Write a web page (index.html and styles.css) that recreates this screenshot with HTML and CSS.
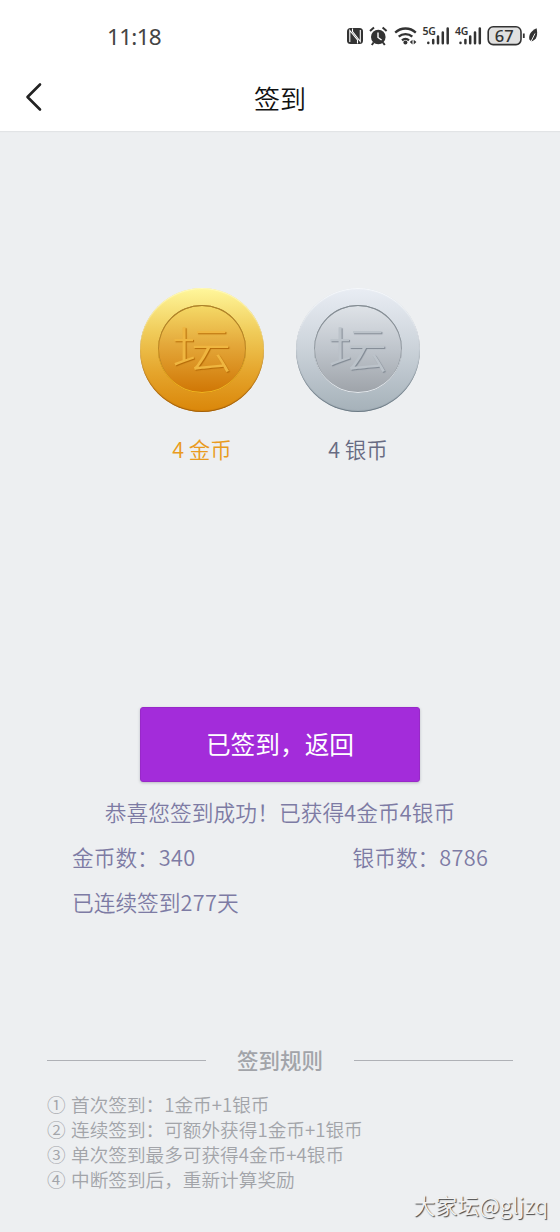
FILE: index.html
```html
<!DOCTYPE html>
<html lang="zh-CN">
<head>
<meta charset="utf-8">
<title>签到</title>
<link rel="stylesheet" href="styles.css">
</head>
<body>
<header class="top">
  <div class="status">
    <span class="time">11:18</span>
    <svg class="icons" width="194" height="26" viewBox="346 23 194 26" fill="none" stroke="#333" stroke-width="2">
      <rect x="347" y="28" width="16" height="16" rx="3.500" fill="#333" stroke="none"/>
      <path d="M349.800 42V30.500L357.500 40V43.500" stroke="#fff" stroke-width="1.100"/>
      <path d="M352.500 28.500V31.500L360.300 41.500V30" stroke="#fff" stroke-width="1.100"/>
      <circle cx="378.300" cy="37" r="7.300" fill="#333" stroke="none"/>
      <path d="M370 31l4-3.500M386.600 31l-4-3.500M373.600 42.500l-1.800 2.500M383 42.500l1.800 2.500"/>
      <path d="M378 32.500v5l3.600 2.500" stroke="#fff" stroke-width="1.400"/>
      <path d="M395.200 32.600a15 15 0 0 1 20.600 0M398.700 36.700a10 10 0 0 1 13.600 0M402 40.300a5.300 5.300 0 0 1 7 0" stroke-width="2.300"/>
      <circle cx="405.400" cy="42.600" r="2" fill="#333" stroke="none"/>
      <path d="M412.500 39.800v4.600l-2.700-2.300zM413.700 39.800v4.600l2.700-2.300z" fill="#333" stroke="none"/>
      <g stroke-width="2.500" stroke-linecap="round">
        <path d="M428.300 42.800v.3M433.200 40v3.200M438 36.500v6.700M442.800 32.500v10.700M447.700 28.500v14.700"/>
        <path d="M460.500 42.800v.3M465.400 40v3.200M470.200 36.500v6.700M475 32.500v10.700M479.800 28.500v14.700"/>
      </g>
      <g class="net"><text x="422.600" y="35.200">5G</text><text x="455" y="35.200">4G</text></g>
      <rect x="488.200" y="26.800" width="32.800" height="17.800" rx="5" fill="#e0e0e0" stroke-width="1.600"/>
      <text class="battery" x="504.300" y="41.600">67</text>
      <path d="M523.800 33.500v4.500" stroke-width="1.800"/>
      <path d="M536.600 28.300C531 31 528.500 34.500 529.300 39.500L531.500 41.500C537 39.500 538 35 536.600 28.300Z" fill="#333" stroke="none"/>
      <path d="M530 43.500l5-10" stroke="#fff" stroke-width=".9"/>
    </svg>
  </div>
  <nav class="nav">
    <svg class="back" width="18" height="30" viewBox="0 0 18 30"><path d="M15 2.500L2.500 15L15 27.500"/></svg>
    <h1 class="title">签到</h1>
    <span></span>
  </nav>
</header>
<main class="page">
  <section class="coins">
    <figure class="coin gold">
      <div class="disc"><div class="inner"><span class="mark">坛</span></div></div>
      <figcaption class="amount">4 金币</figcaption>
    </figure>
    <figure class="coin silver">
      <div class="disc"><div class="inner"><span class="mark">坛</span></div></div>
      <figcaption class="amount">4 银币</figcaption>
    </figure>
  </section>
  <button class="action">已签到，返回</button>
  <section class="result">
    <p class="congrats">恭喜您签到成功！已获得4金币4银币</p>
    <div class="totals"><span>金币数：<b>340</b></span><span>银币数：<b>8786</b></span></div>
    <p class="streak">已连续签到<b>277</b>天</p>
  </section>
  <section class="rules">
    <h2 class="rules-title"><span>签到规则</span></h2>
    <ul class="list">
      <li><span class="num">①</span>首次签到：1金币+1银币</li>
      <li><span class="num">②</span>连续签到：可额外获得1金币+1银币</li>
      <li><span class="num">③</span>单次签到最多可获得4金币+4银币</li>
      <li><span class="num">④</span>中断签到后，重新计算奖励</li>
    </ul>
  </section>
  <div class="watermark">大家坛@gljzq</div>
</main>
</body>
</html>
```
FILE: styles.css
```css
* { box-sizing: border-box; margin: 0; padding: 0; }
body {
  width: 560px; height: 1232px; overflow: hidden;
  display: flex; flex-direction: column;
  background: #edeff1;
  font-family: "Noto Sans CJK SC", sans-serif;
  font-weight: 350;
}
.top { height: 131px; flex: none; background: #fff; box-shadow: 0 1px 1px #e2e4e6; }
.status { display: flex; justify-content: space-between; height: 71px; padding: 23px 20px 0 107px; }
.time { font: 400 22.5px/28px "Noto Sans", sans-serif; color: #444; letter-spacing: -.7px; }
.net text { font: 600 10.500px "Noto Sans", sans-serif; fill: #333; stroke: none; letter-spacing: -.3px; }
.battery { font: 500 16.500px "Noto Sans", sans-serif; fill: #333; stroke: none; text-anchor: middle; }
.nav { display: grid; grid-template-columns: 60px 1fr 60px; align-items: center; height: 52px; }
.back { margin-left: 25px; fill: none; stroke: #222; stroke-width: 2.6; stroke-linecap: round; stroke-linejoin: round; }
.title { font-size: 26px; font-weight: 350; line-height: 36px; padding-top: 2px; text-align: center; color: #111; }
.page { flex: 1; display: flex; flex-direction: column; align-items: center; }
.coins { display: flex; gap: 32px; height: 576px; padding-top: 157px; }
.coin { width: 124px; text-align: center; }
.disc { width: 124px; height: 124px; border-radius: 50%; display: grid; place-items: center; }
.inner { width: 88px; height: 88px; margin-bottom: 2px; border-radius: 50%; display: grid; place-items: center; }
.gold .disc { background: linear-gradient(#fff79b, #f0cc5a 35%, #e5a52c 68%, #da8609); box-shadow: inset 0 -1px 1px #9d5c0b, inset 0 1px 1px #fffac0; }
.gold .inner { background: linear-gradient(#f5da67, #e4a83a 45%, #d07604); box-shadow: inset 0 1px 0 #a9832d, inset 0 -1px 0 #f4b41c, inset 0 0 0 1px #bd8626; }
.silver .disc { background: linear-gradient(#e9edf4, #ced5dc 45%, #a5b1b9); box-shadow: inset 0 -1px 1px #687681, inset 0 1px 1px #f7f9fb; }
.silver .inner { background: linear-gradient(#dfe3e8, #bfc5cc 50%, #9ea3a9); box-shadow: inset 0 1px 0 #828a91, inset 0 -1px 0 #e5eaef, inset 0 0 0 1px #959da4; }
.mark { font-size: 60px; line-height: 60px; font-weight: 300; margin-top: -4px; transform: scaleY(.82); }
.gold .mark { color: #efb640; text-shadow: 1px 1px 1px #b66b08; }
.silver .mark { color: #bcc3ca; text-shadow: 1px 1px 1px #808993; }
.amount { margin-top: 22px; font-size: 21.500px; line-height: 30px; }
.gold .amount { color: #e99b20; }
.silver .amount { color: #686b82; }
.action {
  width: 280px; height: 75px; border: 1px solid #9828c9; border-radius: 3px; padding-bottom: 3px;
  background: #a32cda; color: #fff; font: 400 24.7px/36px "Noto Sans CJK SC", sans-serif;
  box-shadow: 0 1px 3px #b8bbc0;
}
.result { width: 416px; color: #7d7ba4; font-size: 21.700px; line-height: 32px; padding-top: 14px; }
.result b { font-weight: 350; letter-spacing: .35px; margin-right: -.35px; }
.congrats { text-align: center; white-space: nowrap; letter-spacing: .07px; }
.totals { display: flex; justify-content: space-between; margin: 13px 0; white-space: nowrap; }
.rules { width: 466px; margin-top: 126px; color: #a2a4a9; }
.rules-title { display: flex; align-items: center; gap: 31px; font-size: 21.500px; line-height: 32px; font-weight: 500; }
.rules-title::before, .rules-title::after { content: ""; flex: 1; height: 1px; background: #afb1b6; }
.list { list-style: none; margin-top: 15px; font-size: 18.650px; line-height: 25px; white-space: nowrap; }
.num { display: inline-block; width: 24px; }
.watermark { align-self: flex-end; margin: -2px 12px 0 0; font-size: 22px; line-height: 30px; color: #f2f2f2; text-shadow: 1px 1px 1px #444; }
```
